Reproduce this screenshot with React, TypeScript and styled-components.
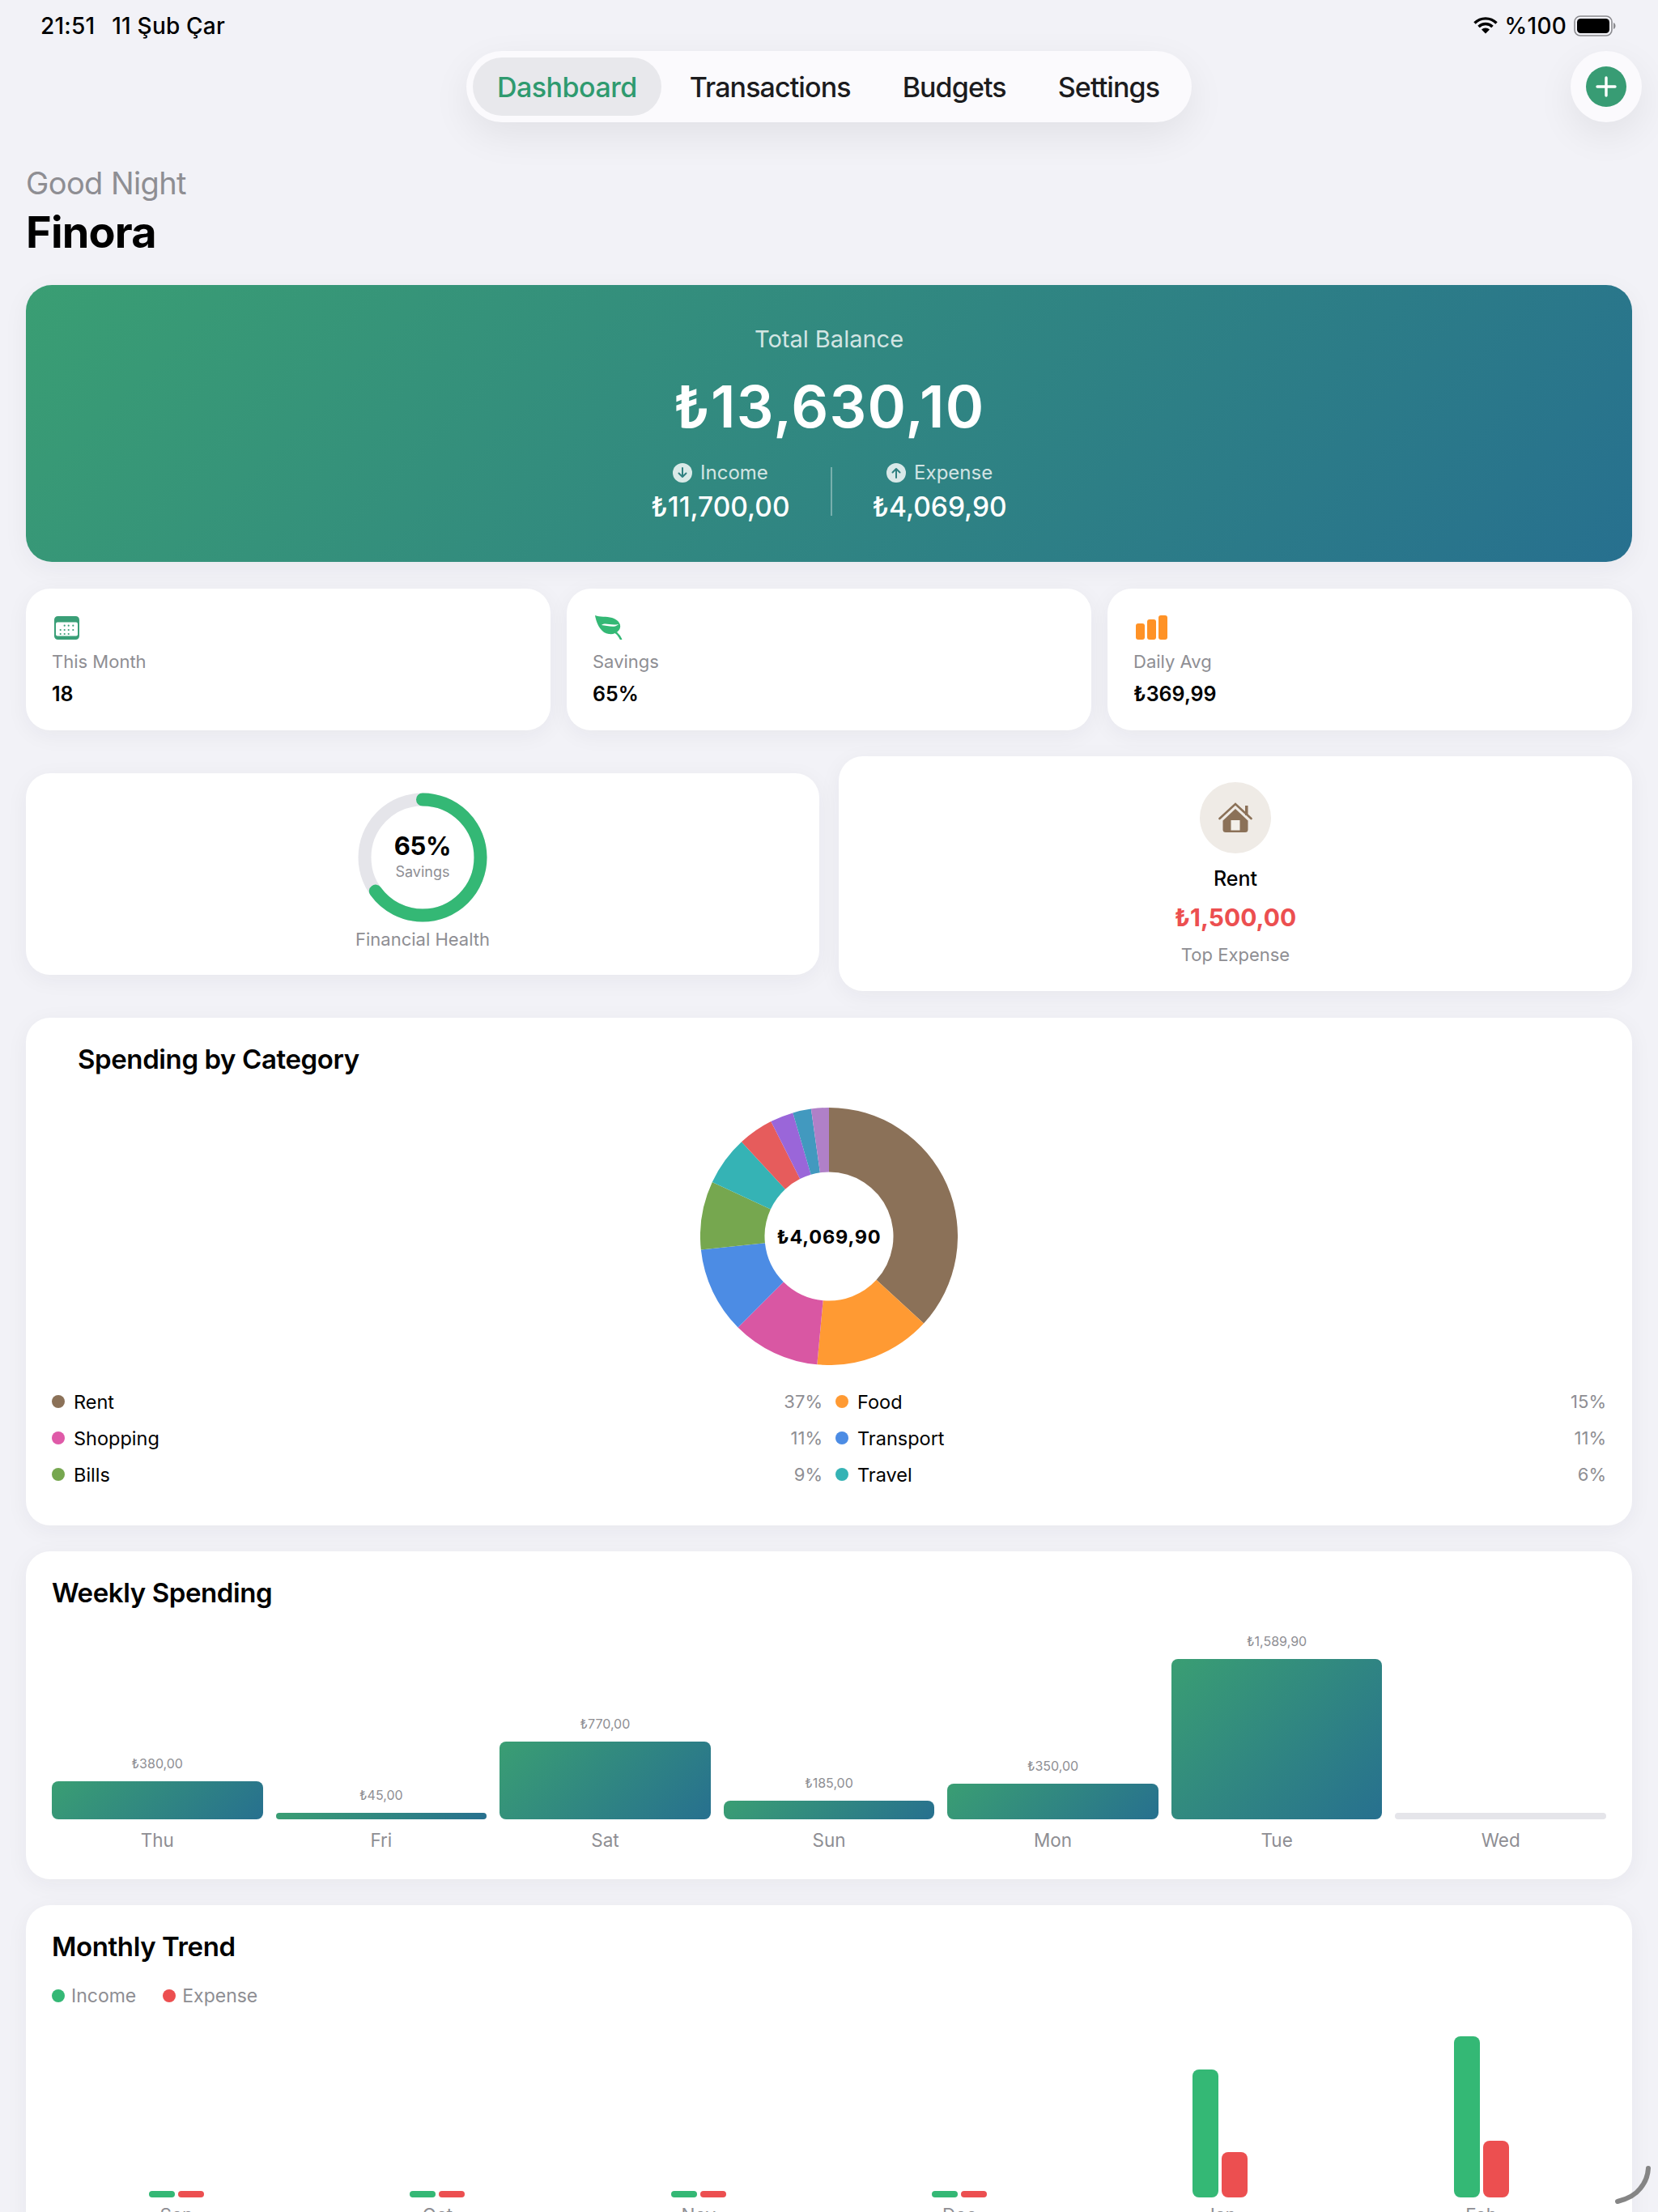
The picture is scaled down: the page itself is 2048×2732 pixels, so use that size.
import React from "react";
import styled, { createGlobalStyle } from "styled-components";

const Global = createGlobalStyle`
  html, body { margin: 0; padding: 0; height: 2732px; overflow: hidden; background: #f2f2f7; }
  body { font-family: Inter, "Noto Sans", "Liberation Sans", sans-serif; color: #000; }
  * { box-sizing: border-box; }
`;

const GREY = "#8e8e93";
const GREEN = "#34b875";
const RED = "#ec4f50";
const GRAD = "linear-gradient(135deg, #3a9e73 0%, #27708f 100%)";
const CARD_SHADOW = "0 6px 28px rgba(30, 30, 60, 0.05)";

const Page = styled.div`
  position: relative;
  width: 2048px;
  height: 2732px;
  overflow: hidden;
  background: #f2f2f7;
`;
const StatusBar = styled.div`
  height: 63px;
  padding: 0 52px 0 50px;
  display: flex;
  align-items: center;
  justify-content: space-between;
  font-size: 28px;
  font-weight: 500;
  letter-spacing: 0.2px;
  color: #000;
`;
const StatusLeft = styled.div`
  display: flex;
  gap: 21px;
`;
const StatusRight = styled.div`
  display: flex;
  align-items: center;
  gap: 9px;
`;
const Header = styled.header`
  display: grid;
  grid-template-columns: 1fr auto 1fr;
  align-items: center;
  padding: 0 20px;
`;
const Nav = styled.nav`
  grid-column: 2;
  height: 88px;
  padding: 8px;
  display: flex;
  align-items: center;
  background: #fbfafd;
  border-radius: 44px;
  box-shadow: 0 16px 48px rgba(0, 0, 0, 0.07);
`;
const Tab = styled.div<{ $active?: boolean }>`
  height: 72px;
  padding: 0 ${(p) => (p.$active ? "30px" : "32px")};
  margin-right: ${(p) => (p.$active ? "3px" : "0")};
  display: flex;
  align-items: center;
  border-radius: 36px;
  font-size: 34px;
  font-weight: 500;
  letter-spacing: ${(p) => (p.$active ? "-0.5px" : "-0.9px")};
  color: ${(p) => (p.$active ? "#2f9a6f" : "#1c1c1e")};
  background: ${(p) => (p.$active ? "#e8e8ec" : "transparent")};
`;
const AddOuter = styled.div`
  grid-column: 3;
  justify-self: end;
  width: 88px;
  height: 88px;
  border-radius: 50%;
  background: #fbfafd;
  display: flex;
  align-items: center;
  justify-content: center;
  box-shadow: 0 16px 48px rgba(0, 0, 0, 0.07);
`;
const Main = styled.main`
  padding: 0 32px;
  display: flex;
  flex-direction: column;
`;
const Greeting = styled.div`
  margin-top: 50px;
  font-size: 38px;
  line-height: 50px;
  color: ${GREY};
  letter-spacing: -0.6px;
`;
const Title = styled.h1`
  margin: 4px 0 0;
  font-size: 54px;
  line-height: 64px;
  font-weight: 700;
  letter-spacing: -0.8px;
`;
const Hero = styled.section`
  margin-top: 33px;
  height: 342px;
  border-radius: 32px;
  background: ${GRAD};
  padding-top: 48px;
  display: flex;
  flex-direction: column;
  align-items: center;
  color: #fff;
  box-shadow: 0 8px 32px rgba(30, 30, 60, 0.05);
`;
const HeroLabel = styled.div`
  font-size: 29px;
  line-height: 38px;
  color: rgba(255, 255, 255, 0.8);
`;
const HeroAmount = styled.div`
  margin-top: 20px;
  font-size: 72px;
  line-height: 88px;
  font-weight: 600;
  letter-spacing: 1.2px;
`;
const HeroRow = styled.div`
  margin-top: 22px;
  display: flex;
  align-items: center;
  gap: 50px;
`;
const HeroCol = styled.div`
  display: flex;
  flex-direction: column;
  align-items: center;
  gap: 6px;
`;
const HeroColLabel = styled.div`
  display: flex;
  align-items: center;
  gap: 10px;
  font-size: 24px;
  line-height: 32px;
  color: rgba(255, 255, 255, 0.8);
`;
const HeroColValue = styled.div`
  font-size: 33.5px;
  line-height: 40px;
  font-weight: 500;
`;
const HeroDivider = styled.div`
  width: 2px;
  height: 60px;
  background: rgba(255, 255, 255, 0.35);
`;
const StatsRow = styled.div`
  margin-top: 33px;
  display: grid;
  grid-template-columns: repeat(3, 1fr);
  gap: 20px;
`;
const Card = styled.section`
  background: #fff;
  border-radius: 30px;
  box-shadow: ${CARD_SHADOW};
`;
const StatCard = styled(Card)`
  height: 175px;
  padding: 33px 32px 0;
  display: flex;
  flex-direction: column;
`;
const StatIcon = styled.div`
  height: 30px;
  padding-left: 3px;
  display: flex;
  align-items: center;
`;
const StatLabel = styled.div`
  margin-top: 12px;
  font-size: 22px;
  line-height: 30px;
  color: ${GREY};
`;
const StatValue = styled.div`
  margin-top: 10px;
  font-size: 25px;
  line-height: 30px;
  font-weight: 600;
`;
const InsightRow = styled.div`
  margin-top: 32px;
  display: grid;
  grid-template-columns: 1fr 1fr;
  gap: 24px;
  align-items: center;
`;
const HealthCard = styled(Card)`
  height: 249px;
  padding-top: 24px;
  display: flex;
  flex-direction: column;
  align-items: center;
`;
const RingWrap = styled.div`
  position: relative;
  width: 160px;
  height: 160px;
`;
const RingCenter = styled.div`
  position: absolute;
  inset: 0;
  display: flex;
  flex-direction: column;
  align-items: center;
  justify-content: center;
`;
const RingValue = styled.div`
  font-size: 31px;
  line-height: 38px;
  font-weight: 700;
  letter-spacing: -0.3px;
  margin-top: -3px;
`;
const RingLabel = styled.div`
  margin-top: 1px;
  font-size: 18px;
  line-height: 24px;
  color: ${GREY};
`;
const HealthLabel = styled.div`
  margin-top: 6px;
  font-size: 22px;
  line-height: 30px;
  color: ${GREY};
`;
const TopCard = styled(Card)`
  height: 290px;
  padding-top: 32px;
  display: flex;
  flex-direction: column;
  align-items: center;
`;
const TopIcon = styled.div`
  width: 88px;
  height: 88px;
  border-radius: 50%;
  background: #efebe6;
  display: flex;
  align-items: center;
  justify-content: center;
`;
const TopName = styled.div`
  margin-top: 16px;
  font-size: 25px;
  line-height: 30px;
  font-weight: 500;
`;
const TopAmount = styled.div`
  margin-top: 13px;
  font-size: 30px;
  line-height: 40px;
  font-weight: 700;
  color: ${RED};
`;
const TopLabel = styled.div`
  margin-top: 11px;
  font-size: 22px;
  line-height: 30px;
  color: ${GREY};
`;
const PanelTitle = styled.h2<{ $indent?: boolean }>`
  margin: 0;
  padding: 0 0 2px ${(p) => (p.$indent ? "32px" : "0")};
  font-size: 33px;
  line-height: 38px;
  font-weight: 600;
  letter-spacing: -0.4px;
`;
const Panel = styled(Card)<{ $first?: boolean }>`
  margin-top: ${(p) => (p.$first ? "33px" : "32px")};
  padding: 32px;
`;
const DonutWrap = styled.div`
  margin-top: 39px;
  height: 318px;
  display: flex;
  justify-content: center;
`;
const Legend = styled.div`
  margin-top: 30px;
  margin-bottom: 16px;
  display: grid;
  grid-template-columns: 1fr 1fr;
  column-gap: 16px;
  row-gap: 15px;
`;
const LegendRow = styled.div`
  height: 30px;
  display: flex;
  align-items: center;
  font-size: 23.5px;
`;
const Dot = styled.span<{ $color: string }>`
  width: 16px;
  height: 16px;
  border-radius: 50%;
  background: ${(p) => p.$color};
  flex: none;
`;
const LegendName = styled.span`
  margin-left: 11px;
  flex: 1;
`;
const LegendPct = styled.span`
  color: ${GREY};
  font-size: 22px;
`;
const WeekChart = styled.div`
  height: 301px;
  display: grid;
  grid-template-columns: repeat(7, 1fr);
  column-gap: 16px;
  align-items: end;
`;
const WeekCol = styled.div`
  display: flex;
  flex-direction: column;
  align-items: center;
`;
const WeekValue = styled.div`
  font-size: 16px;
  line-height: 20px;
  margin-bottom: 12px;
  color: ${GREY};
`;
const WeekBar = styled.div<{ $h: number; $empty?: boolean }>`
  width: 100%;
  height: ${(p) => p.$h}px;
  border-radius: ${(p) => (p.$h < 10 ? "4px" : "8px")};
  background: ${(p) => (p.$empty ? "#e5e5ea" : GRAD)};
`;
const WeekDay = styled.div`
  margin-top: 10px;
  font-size: 22.5px;
  line-height: 32px;
  color: ${GREY};
`;
const TrendLegend = styled.div`
  margin-top: 25px;
  display: flex;
  gap: 33px;
`;
const TrendKey = styled.div`
  height: 30px;
  display: flex;
  align-items: center;
  gap: 8px;
  font-size: 23px;
  color: ${GREY};
`;
const TrendChart = styled.div`
  margin: 0 -7px;
  height: 234px;
  display: grid;
  grid-template-columns: repeat(6, 1fr);
  align-items: end;
`;
const TrendGroup = styled.div`
  height: 100%;
  display: flex;
  align-items: flex-end;
  justify-content: center;
  gap: 4px;
`;
const TrendBar = styled.div<{ $h: number; $color: string }>`
  width: 32px;
  height: ${(p) => p.$h}px;
  border-radius: ${(p) => (p.$h < 10 ? "4px" : "8px")};
  background: ${(p) => p.$color};
`;
const TrendMonth = styled.div`
  text-align: center;
  margin-top: 6px;
  font-size: 22.5px;
  line-height: 32px;
  color: ${GREY};
`;
const TrendLabels = styled.div`
  margin: 0 -7px;
  display: grid;
  grid-template-columns: repeat(6, 1fr);
`;
const PencilMark = styled.svg`
  position: absolute;
  left: 1988px;
  top: 2672px;
  width: 56px;
  height: 56px;
`;

const slices = [
  { end: 132.6, color: "#8b7158" },
  { end: 185.3, color: "#ff9a33" },
  { end: 225, color: "#d957a3" },
  { end: 264, color: "#4c8ce4" },
  { end: 294.9, color: "#76a74f" },
  { end: 317.2, color: "#35b3b5" },
  { end: 333.2, color: "#e65c5c" },
  { end: 343.7, color: "#9a66d9" },
  { end: 352, color: "#4299bf" },
  { end: 360, color: "#b080c8" },
];

function polar(r: number, deg: number) {
  const a = (deg * Math.PI) / 180;
  return [159 + r * Math.sin(a), 159 - r * Math.cos(a)].map((n) => n.toFixed(2)).join(" ");
}

function Donut() {
  let start = 0;
  return (
    <svg width="318" height="318" viewBox="0 0 318 318">
      {slices.map((s) => {
        const large = s.end - start > 180 ? 1 : 0;
        const d = `M${polar(159, start)} A159 159 0 ${large} 1 ${polar(159, s.end)} L${polar(79.5, s.end)} A79.5 79.5 0 ${large} 0 ${polar(79.5, start)} Z`;
        start = s.end;
        return <path key={s.color} d={d} fill={s.color} />;
      })}
      <text x="159" y="168" textAnchor="middle" fontFamily="Inter, sans-serif" fontWeight="700" fontSize="23.5" letterSpacing="0.8" fill="#000">
        ₺4,069,90
      </text>
    </svg>
  );
}

const Wifi = () => (
  <svg width="30" height="21" viewBox="0 0 30 21" fill="none" stroke="#000" strokeWidth="3.4">
    <path d="M1.5 7.5 A19 19 0 0 1 28.5 7.5" />
    <path d="M6.5 12 A12 12 0 0 1 23.5 12" />
    <path d="M15 20.5 L10 15.5 A7 7 0 0 1 20 15.5 Z" fill="#000" stroke="none" />
  </svg>
);

const Battery = () => (
  <svg width="52" height="26" viewBox="0 0 52 26">
    <rect x="1" y="1" width="46" height="24" rx="7" fill="none" stroke="#8a8a8e" strokeWidth="1.6" />
    <rect x="4" y="4" width="40" height="18" rx="4.5" fill="#000" />
    <path d="M49 9 C51 10 51.5 11.5 51.5 13 C51.5 14.5 51 16 49 17 Z" fill="#8a8a8e" />
  </svg>
);

const Plus = () => (
  <svg width="50" height="50" viewBox="0 0 50 50">
    <circle cx="25" cy="25" r="25" fill="#389c74" />
    <path d="M25 14 V36 M14 25 H36" stroke="#fff" strokeWidth="3.4" strokeLinecap="round" />
  </svg>
);

const ArrowBadge = ({ up }: { up?: boolean }) => (
  <svg width="24" height="24" viewBox="0 0 24 24">
    <circle cx="12" cy="12" r="12" fill="rgba(255,255,255,0.82)" />
    {up ? (
      <path d="M12 18 V7 M7.5 11.5 L12 7 L16.5 11.5" stroke="#2f8080" strokeWidth="2" fill="none" strokeLinecap="round" strokeLinejoin="round" />
    ) : (
      <path d="M12 6 V17 M7.5 12.5 L12 17 L16.5 12.5" stroke="#2f8080" strokeWidth="2" fill="none" strokeLinecap="round" strokeLinejoin="round" />
    )}
  </svg>
);

const CalendarIcon = () => (
  <svg width="31" height="29" viewBox="0 0 31 29">
    <rect width="31" height="29" rx="4.5" fill="#3a9f77" />
    <rect x="2" y="7.5" width="27" height="17" rx="2" fill="#fff" />
    {[
      [12.7, 11.7], [17.7, 11.7], [23.3, 11.7],
      [7.7, 17], [12.7, 17], [17.7, 17], [23.3, 17],
      [7.7, 22], [12.7, 22], [17.7, 22],
    ].map(([x, y]) => (
      <circle key={`${x}-${y}`} cx={x} cy={y} r="1.1" fill="#3a9f77" />
    ))}
  </svg>
);

const LeafIcon = () => (
  <svg width="34" height="30" viewBox="0 0 34 30">
    <path d="M0 0 C6 2.5 14 1 21 3 C29 5.5 32 11 31 15 C30 20 24 24 17 23 C8 22 2 12 0 0 Z" fill={GREEN} />
    <path d="M24 20 C27 22 30 25 32 29.5" stroke={GREEN} strokeWidth="2.5" fill="none" strokeLinecap="round" />
    <path d="M8 12 C13 8.5 19 13 29 11 C24 16.5 15 12.5 8 12 Z" fill="#fff" />
  </svg>
);

const BarsIcon = () => (
  <svg width="40" height="30" viewBox="0 0 40 30">
    <rect x="0" y="10" width="11" height="20" rx="3" fill="#ff9226" />
    <rect x="14" y="5" width="11" height="25" rx="3" fill="#ff9226" />
    <rect x="28" y="0" width="11" height="30" rx="3" fill="#ff9226" />
  </svg>
);

const HouseIcon = () => (
  <svg width="42" height="38" viewBox="0 0 42 38">
    <path d="M1.5 20 L21 2 L40.5 20" fill="none" stroke="#8b7158" strokeWidth="2.6" strokeLinecap="round" />
    <rect x="33" y="4" width="3.5" height="12" fill="#8b7158" />
    <path d="M5.5 22.5 L21 8 L36.5 22.5 V33.5 Q36.5 37 33 37 H9 Q5.5 37 5.5 33.5 Z" fill="#8b7158" />
    <rect x="15.5" y="22" width="11" height="12.5" fill="#f3efea" />
  </svg>
);

const tabs = ["Dashboard", "Transactions", "Budgets", "Settings"];
const legend = [
  { name: "Rent", pct: "37%", color: "#8b7158" },
  { name: "Food", pct: "15%", color: "#ff9a33" },
  { name: "Shopping", pct: "11%", color: "#df5aa8" },
  { name: "Transport", pct: "11%", color: "#4c8ce4" },
  { name: "Bills", pct: "9%", color: "#76a74f" },
  { name: "Travel", pct: "6%", color: "#35b3b5" },
];
const week = [
  { day: "Thu", value: "₺380,00", h: 47 },
  { day: "Fri", value: "₺45,00", h: 8 },
  { day: "Sat", value: "₺770,00", h: 96 },
  { day: "Sun", value: "₺185,00", h: 23 },
  { day: "Mon", value: "₺350,00", h: 44 },
  { day: "Tue", value: "₺1,589,90", h: 198 },
  { day: "Wed", value: "", h: 8 },
];
const months = [
  { m: "Sep", inc: 8, exp: 8 },
  { m: "Oct", inc: 8, exp: 8 },
  { m: "Nov", inc: 8, exp: 8 },
  { m: "Dec", inc: 8, exp: 8 },
  { m: "Jan", inc: 158, exp: 56 },
  { m: "Feb", inc: 199, exp: 70 },
];

export default function App() {
  const r = 71.5;
  const circ = 2 * Math.PI * r;
  return (
    <Page>
      <Global />
      <StatusBar>
        <StatusLeft>
          <span>21:51</span>
          <span>11 Şub Çar</span>
        </StatusLeft>
        <StatusRight>
          <Wifi />
          <span>%100</span>
          <Battery />
        </StatusRight>
      </StatusBar>
      <Header>
        <Nav>
          {tabs.map((t, i) => (
            <Tab key={t} $active={i === 0}>
              {t}
            </Tab>
          ))}
        </Nav>
        <AddOuter>
          <Plus />
        </AddOuter>
      </Header>
      <Main>
        <Greeting>Good Night</Greeting>
        <Title>Finora</Title>
        <Hero>
          <HeroLabel>Total Balance</HeroLabel>
          <HeroAmount>₺13,630,10</HeroAmount>
          <HeroRow>
            <HeroCol>
              <HeroColLabel>
                <ArrowBadge />
                Income
              </HeroColLabel>
              <HeroColValue>₺11,700,00</HeroColValue>
            </HeroCol>
            <HeroDivider />
            <HeroCol>
              <HeroColLabel>
                <ArrowBadge up />
                Expense
              </HeroColLabel>
              <HeroColValue>₺4,069,90</HeroColValue>
            </HeroCol>
          </HeroRow>
        </Hero>
        <StatsRow>
          <StatCard>
            <StatIcon>
              <CalendarIcon />
            </StatIcon>
            <StatLabel>This Month</StatLabel>
            <StatValue>18</StatValue>
          </StatCard>
          <StatCard>
            <StatIcon>
              <LeafIcon />
            </StatIcon>
            <StatLabel>Savings</StatLabel>
            <StatValue>65%</StatValue>
          </StatCard>
          <StatCard>
            <StatIcon>
              <BarsIcon />
            </StatIcon>
            <StatLabel>Daily Avg</StatLabel>
            <StatValue>₺369,99</StatValue>
          </StatCard>
        </StatsRow>
        <InsightRow>
          <HealthCard>
            <RingWrap>
              <svg width="160" height="160" viewBox="0 0 160 160">
                <circle cx="80" cy="80" r={r} fill="none" stroke="#e5e5ea" strokeWidth="16" />
                <circle
                  cx="80"
                  cy="80"
                  r={r}
                  fill="none"
                  stroke={GREEN}
                  strokeWidth="16"
                  strokeLinecap="round"
                  strokeDasharray={`${circ * 0.65} ${circ}`}
                  transform="rotate(-90 80 80)"
                />
              </svg>
              <RingCenter>
                <RingValue>65%</RingValue>
                <RingLabel>Savings</RingLabel>
              </RingCenter>
            </RingWrap>
            <HealthLabel>Financial Health</HealthLabel>
          </HealthCard>
          <TopCard>
            <TopIcon>
              <HouseIcon />
            </TopIcon>
            <TopName>Rent</TopName>
            <TopAmount>₺1,500,00</TopAmount>
            <TopLabel>Top Expense</TopLabel>
          </TopCard>
        </InsightRow>
        <Panel $first>
          <PanelTitle $indent>Spending by Category</PanelTitle>
          <DonutWrap>
            <Donut />
          </DonutWrap>
          <Legend>
            {legend.map((l) => (
              <LegendRow key={l.name}>
                <Dot $color={l.color} />
                <LegendName>{l.name}</LegendName>
                <LegendPct>{l.pct}</LegendPct>
              </LegendRow>
            ))}
          </Legend>
        </Panel>
        <Panel>
          <PanelTitle>Weekly Spending</PanelTitle>
          <WeekChart>
            {week.map((w) => (
              <WeekCol key={w.day}>
                {w.value && <WeekValue>{w.value}</WeekValue>}
                <WeekBar $h={w.h} $empty={!w.value} />
                <WeekDay>{w.day}</WeekDay>
              </WeekCol>
            ))}
          </WeekChart>
        </Panel>
        <Panel>
          <PanelTitle>Monthly Trend</PanelTitle>
          <TrendLegend>
            <TrendKey>
              <Dot $color={GREEN} />
              Income
            </TrendKey>
            <TrendKey>
              <Dot $color={RED} />
              Expense
            </TrendKey>
          </TrendLegend>
          <TrendChart>
            {months.map((m) => (
              <TrendGroup key={m.m}>
                <TrendBar $h={m.inc} $color={GREEN} />
                <TrendBar $h={m.exp} $color={RED} />
              </TrendGroup>
            ))}
          </TrendChart>
          <TrendLabels>
            {months.map((m) => (
              <TrendMonth key={m.m}>{m.m}</TrendMonth>
            ))}
          </TrendLabels>
        </Panel>
      </Main>
      <PencilMark viewBox="0 0 56 56">
        <path d="M48 6 C47.5 15 44 24 38 31 C32 39 22 44 10 47" fill="none" stroke="#858585" strokeWidth="6" strokeLinecap="round" />
      </PencilMark>
    </Page>
  );
}
